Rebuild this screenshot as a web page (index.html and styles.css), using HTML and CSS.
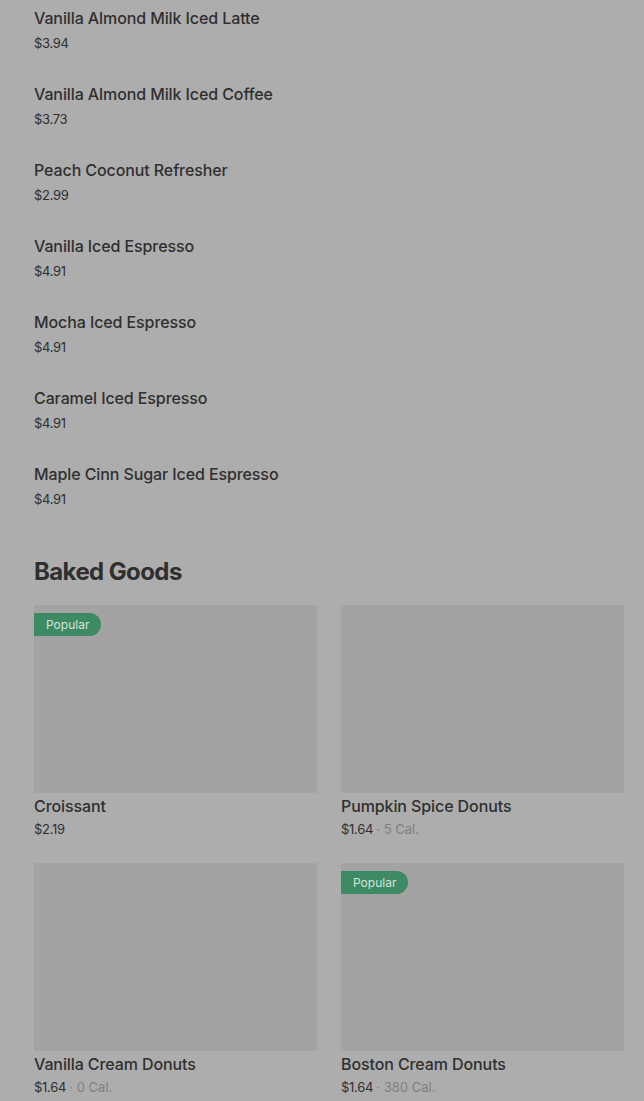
FILE: index.html
```html
<!DOCTYPE html>
<html>
	<head>
		<title>Menu</title>
		<link rel="stylesheet" href="styles.css">
	</head>
	<body>
		<div class="menu">
			<ul class="item_list">
				<li class="item">
					<div class="item_name">Vanilla Almond Milk Iced Latte</div>
					<div class="item_price">$3.94</div>
				</li>
				<li class="item">
					<div class="item_name">Vanilla Almond Milk Iced Coffee</div>
					<div class="item_price">$3.73</div>
				</li>
				<li class="item">
					<div class="item_name">Peach Coconut Refresher</div>
					<div class="item_price">$2.99</div>
				</li>
				<li class="item">
					<div class="item_name">Vanilla Iced Espresso</div>
					<div class="item_price">$4.91</div>
				</li>
				<li class="item">
					<div class="item_name">Mocha Iced Espresso</div>
					<div class="item_price">$4.91</div>
				</li>
				<li class="item">
					<div class="item_name">Caramel Iced Espresso</div>
					<div class="item_price">$4.91</div>
				</li>
				<li class="item">
					<div class="item_name">Maple Cinn Sugar Iced Espresso</div>
					<div class="item_price">$4.91</div>
				</li>
			</ul>

			<h2 class="section_title">Baked Goods</h2>

			<div class="card_grid">
				<div class="card">
					<div class="card_img">
						<span class="badge">Popular</span>
					</div>
					<div class="item_name">Croissant</div>
					<div class="item_price">$2.19</div>
				</div>
				<div class="card">
					<div class="card_img"></div>
					<div class="item_name">Pumpkin Spice Donuts</div>
					<div class="item_price">$1.64 <span class="cal">&middot; 5 Cal.</span></div>
				</div>
				<div class="card">
					<div class="card_img"></div>
					<div class="item_name">Vanilla Cream Donuts</div>
					<div class="item_price">$1.64 <span class="cal">&middot; 0 Cal.</span></div>
				</div>
				<div class="card">
					<div class="card_img">
						<span class="badge">Popular</span>
					</div>
					<div class="item_name">Boston Cream Donuts</div>
					<div class="item_price">$1.64 <span class="cal">&middot; 380 Cal.</span></div>
				</div>
			</div>
		</div>
	</body>
</html>
```

FILE: styles.css
```css
body
{
	margin:0;
	background:#adadad;
	font-family:"Inter", "Roboto", sans-serif;
	color:#2f2f2f;
}
.menu
{
	padding:8px 20px 0 34px;
}
/*=============================*/
.item_list
{
	list-style:none;
	margin:0;
	padding:0;
}
.item
{
	height:76px;
}
.item_name
{
	font-size:16px;
	font-weight:500;
	line-height:20px;
	letter-spacing:-0.1px;
}
.item_price
{
	font-size:13px;
	line-height:20px;
	margin-top:5px;
	letter-spacing:-0.3px;
}
.cal
{
	color:#808080;
	letter-spacing:0;
}
/*=============================*/
.section_title
{
	margin:16px 0 17px 0;
	font-size:24px;
	line-height:32px;
	font-weight:700;
	letter-spacing:-0.6px;
}
.card_grid
{
	display:grid;
	grid-template-columns:1fr 1fr;
	column-gap:24px;
	row-gap:24px;
}
.card_img
{
	height:188px;
	background:#a3a3a3;
	padding-top:8px;
	box-sizing:border-box;
}
.card .item_name
{
	margin-top:2px;
	line-height:22px;
}
.card .item_price
{
	margin-top:2px;
}
.badge
{
	display:inline-block;
	background:#3d8a64;
	color:#d6e4dc;
	font-size:12px;
	line-height:23px;
	padding:0 12px;
	border-radius:0 12px 12px 0;
}
```
